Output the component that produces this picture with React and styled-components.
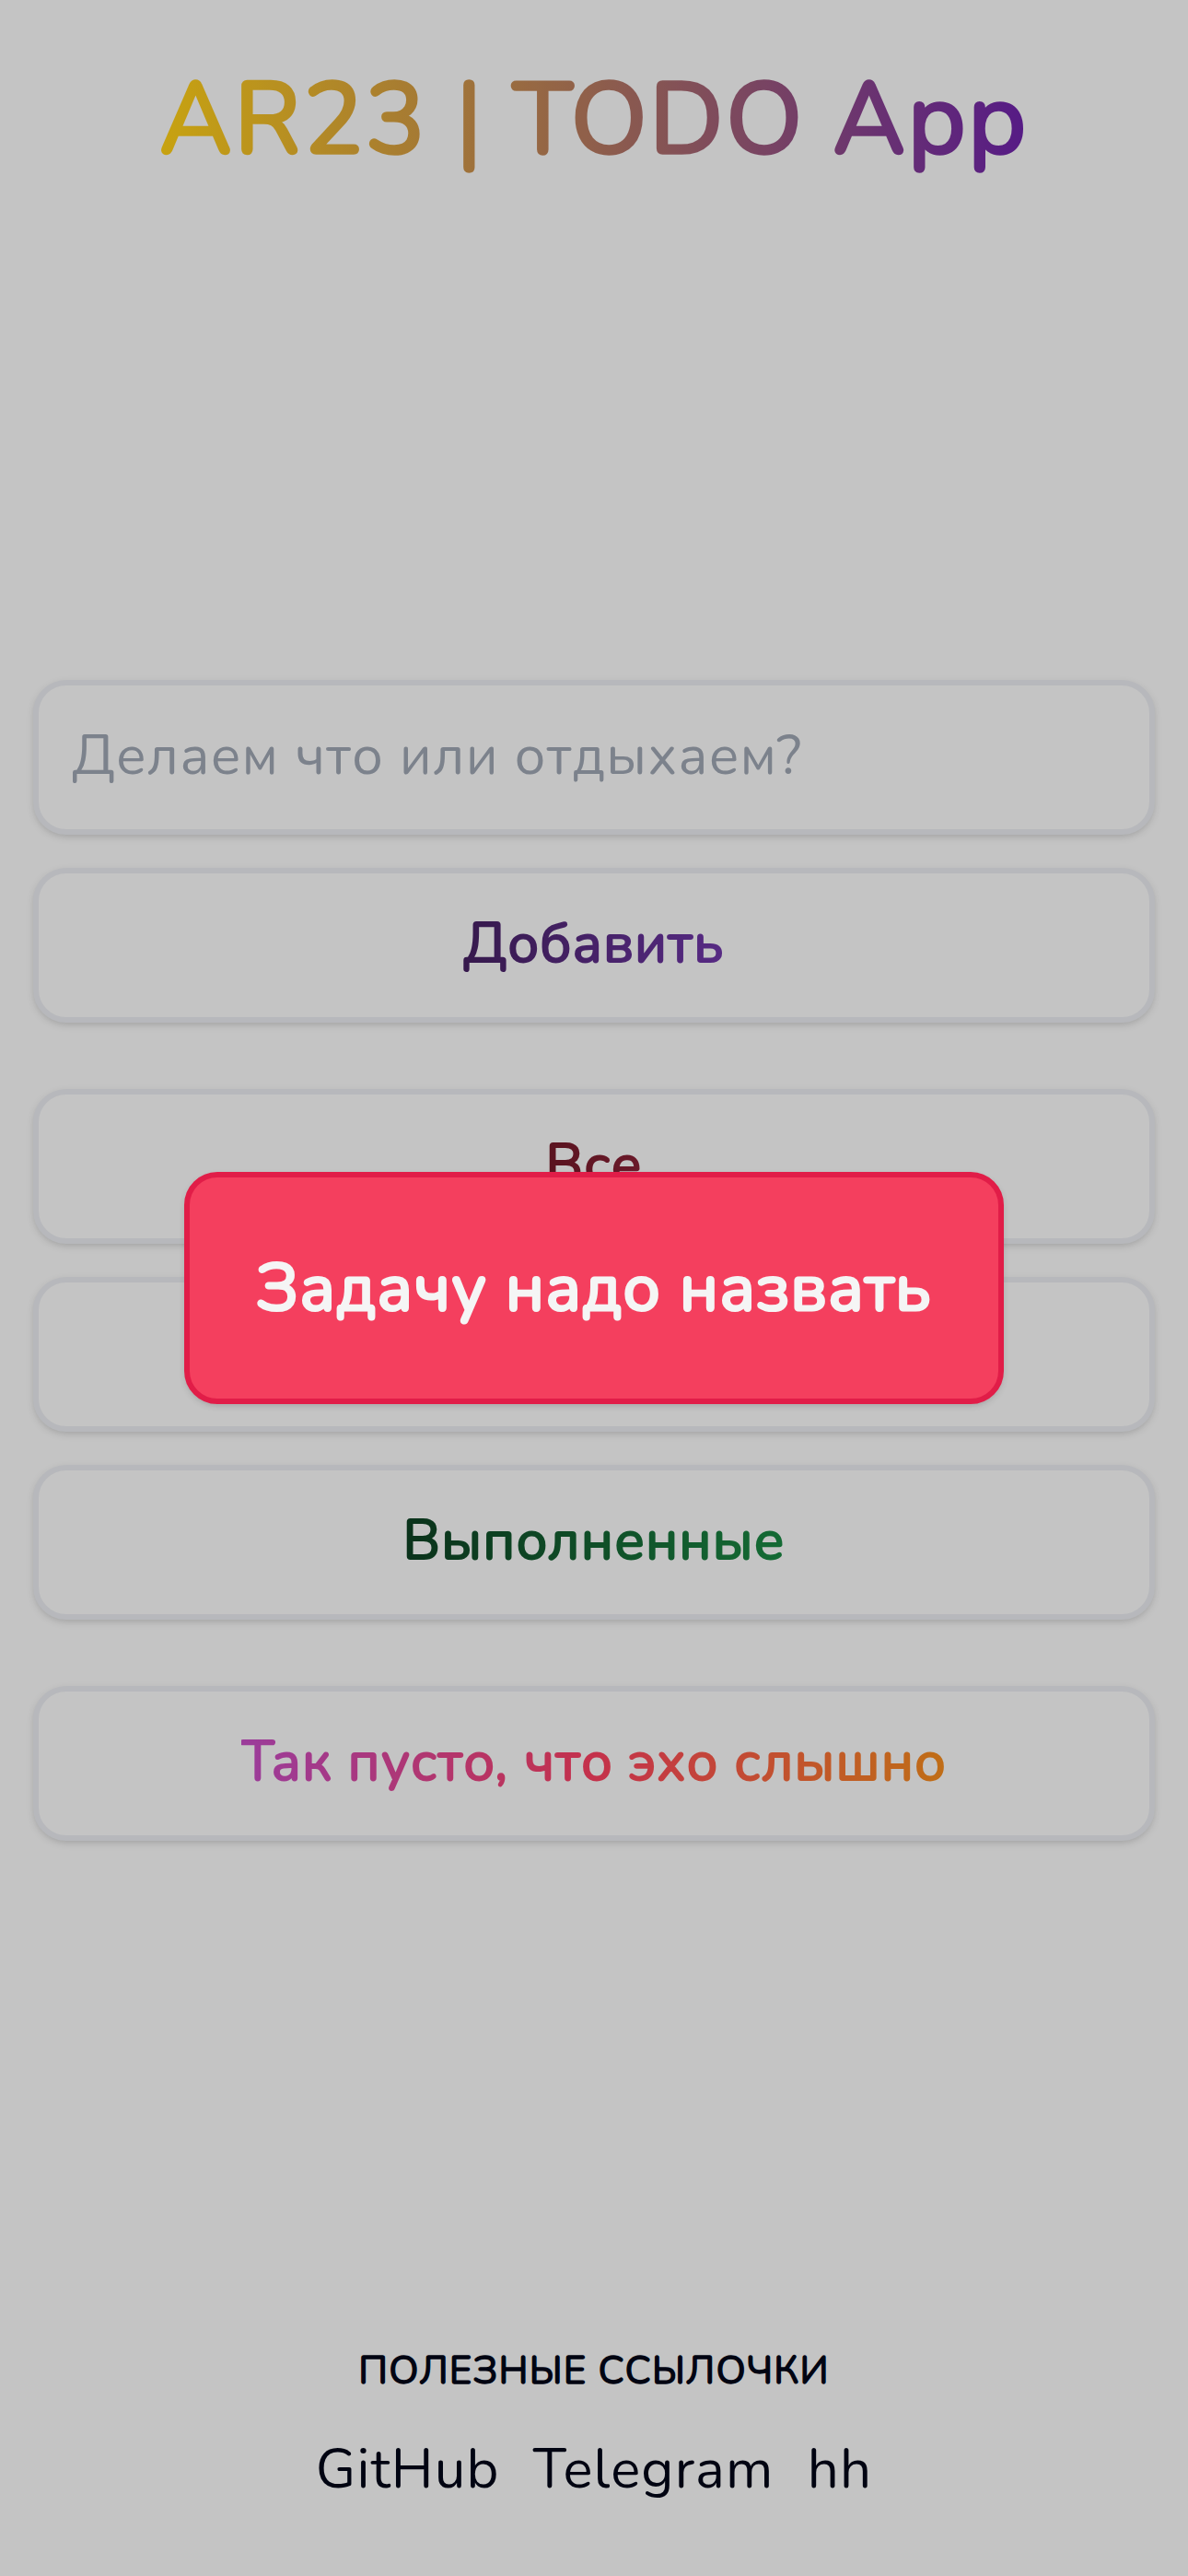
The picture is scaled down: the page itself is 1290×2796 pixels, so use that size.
import React, { useState } from "react";
import styled, { createGlobalStyle, css } from "styled-components";

const GlobalStyle = createGlobalStyle`
  *, *::before, *::after {
    box-sizing: border-box;
  }

  body {
    margin: 0;
    background: #f5f5f5;
    color: #020617;
    font-family: Nunito, Lato, "Open Sans", sans-serif;
    font-size: 48px;
    letter-spacing: 0.025em;
  }
`;

/* Regular weight with a heavier outline, used for all emphasised text */
const emphasis = css`
  font-weight: 400;
  -webkit-text-stroke-width: 0.033em;
`;

const Page = styled.div`
  display: flex;
  flex-direction: column;
  min-height: 100vh;
`;

const Header = styled.header`
  display: flex;
  justify-content: center;
  padding: 72px 36px 74px;
`;

const GradientText = styled.span`
  ${emphasis}
  background-image: linear-gradient(to right, ${({ $colors }) => $colors.join(", ")});
  background-clip: text;
  -webkit-background-clip: text;
  color: transparent;
`;

const Title = styled(GradientText)`
  margin: 0;
  font-size: 108px;
  line-height: 118px;
  letter-spacing: 0.025em;
`;

const Main = styled.main`
  flex: 1;
  display: flex;
  flex-direction: column;
  justify-content: center;
  gap: 72px;
  padding: 0 36px;
`;

const Group = styled.div`
  display: flex;
  flex-direction: column;
  gap: 36px;
`;

const raised = css`
  border: 6px solid;
  border-radius: 36px;
  box-shadow: 0 3px 9px rgba(0, 0, 0, 0.1), 0 3px 6px -3px rgba(0, 0, 0, 0.1);
`;

const panel = css`
  ${raised}
  width: 100%;
  margin: 0;
  padding: 36px 36px 40px;
  border-color: #e5e7eb;
  background: #f5f5f5;
  font-family: inherit;
  font-size: 60px;
  line-height: 80px;
  letter-spacing: inherit;
`;

const TaskInput = styled.input`
  ${panel}
  height: 168px;
  font-weight: 400;
  color: #020617;
  outline: none;

  &::placeholder {
    color: #9ca3af;
    opacity: 1;
  }
`;

const Button = styled.button`
  ${panel}
  display: flex;
  justify-content: center;
  cursor: pointer;
`;

const EmptyNote = styled.p`
  ${panel}
  display: flex;
  justify-content: center;
`;

const Footer = styled.footer`
  display: flex;
  flex-direction: column;
  align-items: center;
  gap: 36px;
  padding: 72px 36px 76px;
`;

const FooterTitle = styled.h2`
  ${emphasis}
  margin: 0;
  font-size: 42px;
  line-height: 60px;
  text-transform: uppercase;
`;

const Links = styled.nav`
  display: flex;
  gap: 36px;
`;

const FooterLink = styled.a`
  color: inherit;
  font-size: 60px;
  line-height: 80px;
  text-decoration: none;
`;

const Overlay = styled.div`
  position: fixed;
  inset: 0;
  display: flex;
  align-items: center;
  justify-content: center;
  background: rgba(0, 0, 0, 0.2);
`;

const Alert = styled.div`
  ${raised}
  padding: 72px;
  border-color: #e11d48;
  background: #f43f5e;
  color: #f5f5f5;
  font-size: 72px;
  line-height: 96px;
  font-weight: 400;
  -webkit-text-stroke-width: 0.043em;
`;

const FILTERS = [
  { label: "Все", colors: ["#701928", "#862035"] },
  { label: "Активные", colors: ["#1e2f6b", "#2a4fc0"] },
  { label: "Выполненные", colors: ["#0d3f22", "#1a8642"] },
];

const LINKS = [
  { label: "GitHub", href: "https://github.com" },
  { label: "Telegram", href: "https://telegram.org" },
  { label: "hh", href: "https://hh.ru" },
];

export default function App() {
  const [task, setTask] = useState("");
  const [alertOpen, setAlertOpen] = useState(true);

  const handleSubmit = (event) => {
    event.preventDefault();
    if (!task.trim()) setAlertOpen(true);
  };

  return (
    <>
      <GlobalStyle />
      <Page>
        <Header>
          <Title as="h1" $colors={["#facc15", "#6b21a8"]}>
            AR23 | TODO App
          </Title>
        </Header>
        <Main>
          <Group as="form" onSubmit={handleSubmit}>
            <TaskInput
              type="text"
              aria-label="Новая задача"
              placeholder="Делаем что или отдыхаем?"
              value={task}
              onChange={(event) => setTask(event.target.value)}
            />
            <Button type="submit">
              <GradientText $colors={["#442060", "#6d35a5"]}>Добавить</GradientText>
            </Button>
          </Group>
          <Group>
            {FILTERS.map(({ label, colors }) => (
              <Button key={label} type="button">
                <GradientText $colors={colors}>{label}</GradientText>
              </Button>
            ))}
          </Group>
          <EmptyNote>
            <GradientText $colors={["#c24bc2", "#f63e5e", "#f08a1c"]}>
              Так пусто, что эхо слышно
            </GradientText>
          </EmptyNote>
        </Main>
        <Footer>
          <FooterTitle>Полезные ссылочки</FooterTitle>
          <Links>
            {LINKS.map(({ label, href }) => (
              <FooterLink key={label} href={href}>
                {label}
              </FooterLink>
            ))}
          </Links>
        </Footer>
      </Page>
      {alertOpen && (
        <Overlay onClick={() => setAlertOpen(false)}>
          <Alert role="alert">Задачу надо назвать</Alert>
        </Overlay>
      )}
    </>
  );
}
